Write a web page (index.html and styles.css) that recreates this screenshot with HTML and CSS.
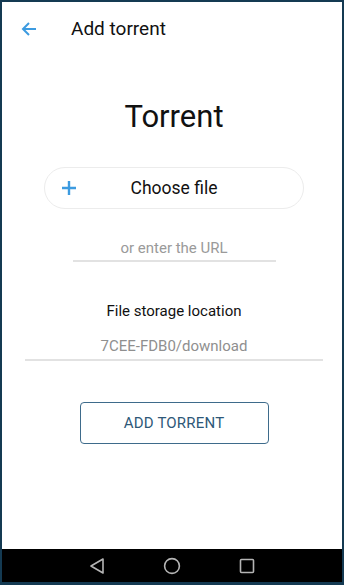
FILE: index.html
```html
<!DOCTYPE html>
<html>
<head>
<meta charset="utf-8">
<link rel="stylesheet" href="styles.css">
</head>
<body>
<div class="frame">
  <div class="screen">
    <header class="appbar">
      <svg class="back" width="16" height="16" viewBox="0 0 16 16"><path d="M15 8H2M8 2L2 8l6 6" fill="none" stroke="#3d9be0" stroke-width="2"/></svg>
      <span class="title">Add torrent</span>
    </header>
    <main class="content">
      <h1 class="heading">Torrent</h1>
      <div class="choose">
        <svg class="plus" width="14" height="14" viewBox="0 0 14 14"><path d="M7 0v14M0 7h14" stroke="#3d9be0" stroke-width="2.4"/></svg>
        <span class="choose-text">Choose file</span>
      </div>
      <div class="url">or enter the URL</div>
      <div class="label">File storage location</div>
      <div class="path">7CEE-FDB0/download</div>
      <button class="add">ADD TORRENT</button>
    </main>
    <nav class="navbar">
      <svg width="16" height="18" viewBox="0 0 16 18"><path d="M14 2L2 9l12 7z" fill="none" stroke="#b5b5b5" stroke-width="1.6" stroke-linejoin="round"/></svg>
      <svg width="18" height="18" viewBox="0 0 18 18"><circle cx="9" cy="9" r="7.4" fill="none" stroke="#b5b5b5" stroke-width="1.6"/></svg>
      <svg width="16" height="16" viewBox="0 0 16 16"><rect x="1.5" y="1.5" width="13" height="13" rx="1" fill="none" stroke="#b5b5b5" stroke-width="1.6"/></svg>
    </nav>
  </div>
</div>
</body>
</html>
```
FILE: styles.css
```css
html, body { margin: 0; padding: 0; }
body { font-family: Roboto, "Noto Sans", sans-serif; }
.frame {
  width: 344px; height: 585px; box-sizing: border-box;
  border: 2px solid #143a52; border-bottom-width: 3px;
  background: #143a52;
}
.screen {
  height: 100%; display: flex; flex-direction: column; background: #fff;
}
.appbar {
  height: 54px; display: flex; align-items: center; flex-shrink: 0;
}
.back { margin-left: 19px; margin-top: -1px; }
.title { margin-left: 34px; font-size: 19px; color: #111; margin-top: -1px; }
.content {
  flex: 1; display: flex; flex-direction: column; align-items: center;
  padding-left: 4px;
}
.heading {
  margin: 42px 0 0; font-size: 31px; font-weight: 400; color: #111; line-height: 38px;
}
.choose {
  margin-top: 31px; width: 260px; height: 42px; box-sizing: border-box;
  border: 1px solid #ececec; border-radius: 21px;
  display: flex; align-items: center; position: relative;
}
.plus { margin-left: 17px; }
.choose-text { position: absolute; left: 0; right: 0; text-align: center; font-size: 17.5px; color: #111; }
.url {
  margin-top: 29px; width: 203px; text-align: center; font-size: 15px; color: #9a9a9a;
  padding-bottom: 2px; border-bottom: 2px solid #e2e2e2; line-height: 20px;
}
.label { margin-top: 39px; font-size: 15px; color: #111; line-height: 20px; }
.path {
  margin-top: 15px; width: 298px; text-align: center; font-size: 15px; color: #8f8f8f;
  padding-bottom: 3px; border-bottom: 2px solid #e2e2e2; line-height: 20px;
}
.add {
  margin-top: 41px; width: 189px; height: 42px; box-sizing: border-box;
  background: #fff; border: 1px solid #3e6b8b; border-radius: 4px;
  font-family: Roboto, sans-serif; font-size: 15px; color: #2e5878; letter-spacing: 0.2px;
}
.navbar {
  height: 33px; background: #000; flex-shrink: 0;
  display: flex; align-items: center; justify-content: center; gap: 58px;
}
```
